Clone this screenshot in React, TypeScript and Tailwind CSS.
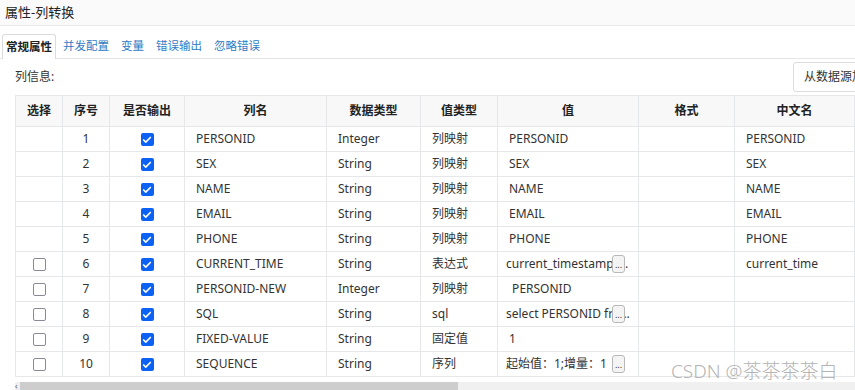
import { Check } from "lucide-react";

const rows = [
  { no: 1, sel: false, name: "PERSONID", type: "Integer", vt: "列映射", val: "PERSONID", btn: false, cn: "PERSONID" },
  { no: 2, sel: false, name: "SEX", type: "String", vt: "列映射", val: "SEX", btn: false, cn: "SEX" },
  { no: 3, sel: false, name: "NAME", type: "String", vt: "列映射", val: "NAME", btn: false, cn: "NAME" },
  { no: 4, sel: false, name: "EMAIL", type: "String", vt: "列映射", val: "EMAIL", btn: false, cn: "EMAIL" },
  { no: 5, sel: false, name: "PHONE", type: "String", vt: "列映射", val: "PHONE", btn: false, cn: "PHONE" },
  { no: 6, sel: true, name: "CURRENT_TIME", type: "String", vt: "表达式", val: "current_timestamp_sysdate", btn: true, cn: "current_time" },
  { no: 7, sel: true, name: "PERSONID-NEW", type: "Integer", vt: "列映射", val: "\u00a0PERSONID", btn: false, cn: "" },
  { no: 8, sel: true, name: "SQL", type: "String", vt: "sql", val: "select PERSONID from", btn: true, cn: "" },
  { no: 9, sel: true, name: "FIXED-VALUE", type: "String", vt: "固定值", val: "1", btn: false, cn: "" },
  { no: 10, sel: true, name: "SEQUENCE", type: "String", vt: "序列", val: "起始值：1;增量：1", btn: true, cn: "" },
];

function Checked() {
  return (
    <span className="inline-flex w-[13px] h-[13px] rounded-[2px] bg-[#0b62f4] items-center justify-center align-middle">
      <Check className="w-[10px] h-[10px] text-white" strokeWidth={4} />
    </span>
  );
}

function Unchecked() {
  return <span className="inline-block w-[13px] h-[13px] rounded-[2px] border-[1.5px] border-[#8a8a96] bg-white align-middle" />;
}

const th = "border border-[#e6e7ea] h-[31px] text-center font-bold text-[12px] text-[#222]";
const td = "border border-[#e6e7ea] h-[25px] text-[12px] text-[#333] px-[11px] whitespace-nowrap overflow-hidden";

export default function App() {
  return (
    <div className="relative w-[855px] h-[390px] overflow-hidden bg-white flex flex-col" style={{ fontFamily: '"Noto Sans", "Noto Sans CJK SC", sans-serif' }}>
      {/* Title */}
      <div className="h-[26px] shrink-0 bg-[#fafafa] border-b border-[#e8e8e8] flex items-center pl-[5px] text-[13px] text-[#222]">
        属性-列转换
      </div>

      {/* Tabs */}
      <div className="mt-[8px] shrink-0 flex items-end h-[25px] border-b border-[#e4e4e4] pl-[2px] text-[11.5px]">
        <div className="h-[25px] px-[3px] flex items-center border border-b-0 border-[#dcdcdc] rounded-t-[3px] bg-white text-[#222] font-bold -mb-px">常规属性</div>
        <div className="flex items-center h-[24px] gap-[12px] ml-[7px] text-[#2f7bc4]">
          <span>并发配置</span>
          <span>变量</span>
          <span>错误输出</span>
          <span>忽略错误</span>
        </div>
      </div>

      {/* 列信息 */}
      <div className="shrink-0 flex items-center justify-between h-[36px] pl-[15px]">
        <span className="text-[12px] text-[#333]">列信息:</span>
        <div className="h-[30px] w-[70px] -mr-[8px] border border-[#dcdcdc] rounded-[3px] flex items-center pl-[10px] text-[12px] text-[#333] whitespace-nowrap overflow-hidden">
          从数据源加载
        </div>
      </div>

      {/* Table */}
      <div className="shrink-0 pl-[15px] h-[282px] overflow-hidden">
        <table className="border-collapse table-fixed w-[1000px]">
          <colgroup>
            <col className="w-[47px]" />
            <col className="w-[47px]" />
            <col className="w-[75px]" />
            <col className="w-[142px]" />
            <col className="w-[94px]" />
            <col className="w-[77px]" />
            <col className="w-[141px]" />
            <col className="w-[96px]" />
            <col className="w-[120px]" />
            <col className="w-[161px]" />
          </colgroup>
          <thead>
            <tr className="bg-[#f8f8f9]">
              <th className={th}>选择</th>
              <th className={th}>序号</th>
              <th className={th}>是否输出</th>
              <th className={th}>列名</th>
              <th className={th}>数据类型</th>
              <th className={th}>值类型</th>
              <th className={th}>值</th>
              <th className={th}>格式</th>
              <th className={th}>中文名</th>
              <th className={th}>描述</th>
            </tr>
          </thead>
          <tbody>
            {rows.map((r) => (
              <tr key={r.no} className="bg-white">
                <td className={`${td} text-center px-0`}>{r.sel && <Unchecked />}</td>
                <td className={`${td} text-center px-0`}>{r.no}</td>
                <td className={`${td} text-center px-0`}><Checked /></td>
                <td className={td}>{r.name}</td>
                <td className={td}>{r.type}</td>
                <td className={td}>{r.vt}</td>
                <td className={`${td} relative ${r.btn ? "pl-[8px] pr-[8px]" : ""}`}>
                  <span className="block overflow-hidden text-ellipsis">{r.val}</span>
                  {r.btn && (
                    <span className="absolute right-[13px] top-[3px] w-[13px] h-[18px] rounded-[3px] border border-[#b8b8b8] bg-[#f4f4f4] text-[9px] leading-[18px] text-center text-[#333]">...</span>
                  )}
                </td>
                <td className={td}></td>
                <td className={td}>{r.cn}</td>
                <td className={td}></td>
              </tr>
            ))}
          </tbody>
        </table>
      </div>

      {/* Scrollbar */}
      <div className="mt-[5px] ml-[15px] h-[8px] shrink-0 flex items-stretch bg-[#f0f0f0]">
        <span className="w-[5px] text-[8px] leading-[8px] text-[#555]">‹</span>
        <div className="w-[438px] bg-[#cdcdcd]" />
      </div>

      {/* Watermark */}
      <div className="absolute left-[671px] top-[357px] text-[19px] font-light text-[#b4b4b4] whitespace-nowrap">
        CSDN @茶茶茶茶白
      </div>
    </div>
  );
}
